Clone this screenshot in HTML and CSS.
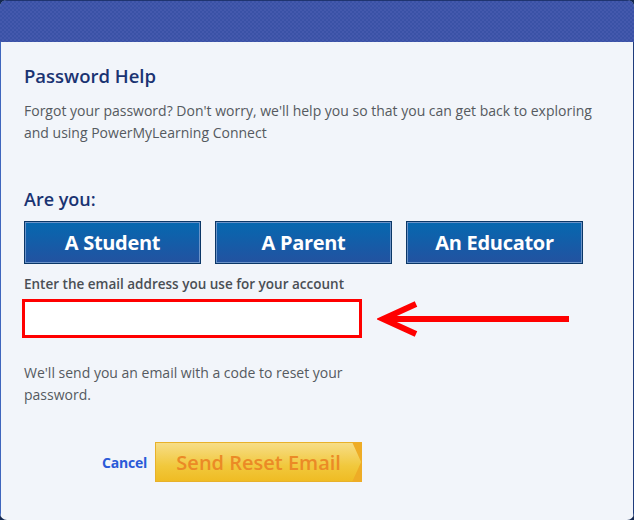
FILE: index.html
```html
<!DOCTYPE html>
<html>
<head>
<meta charset="utf-8">
<link rel="stylesheet" href="styles.css">
</head>
<body>
<div class="modal">
  <div class="modal-header"></div>
  <div class="modal-body">
    <h1 class="title">Password Help</h1>
    <p class="intro">Forgot your password? Don't worry, we'll help you so that you can get back to exploring and using PowerMyLearning Connect</p>
    <h2 class="subtitle">Are you:</h2>
    <div class="roles">
      <button class="role">A Student</button>
      <button class="role">A Parent</button>
      <button class="role">An Educator</button>
    </div>
    <label class="label">Enter the email address you use for your account</label>
    <div class="input-row">
      <div class="email"></div>
      <svg class="arrow" width="194" height="38" viewBox="0 0 194 38">
        <line x1="10" y1="19" x2="192" y2="19" stroke="#ff0000" stroke-width="6"/>
        <polyline points="39,4 6,19 39,34" fill="none" stroke="#ff0000" stroke-width="6"/>
      </svg>
    </div>
    <p class="note">We'll send you an email with a code to reset your password.</p>
    <div class="actions">
      <a class="cancel">Cancel</a>
      <button class="send">Send Reset Email</button>
    </div>
  </div>
</div>
</body>
</html>
```
FILE: styles.css
```css
html, body {
  margin: 0;
  padding: 0;
  background: #14284f;
}
body {
  width: 634px;
  height: 520px;
  overflow: hidden;
  font-family: "Open Sans", "Lato", sans-serif;
}
.modal {
  width: 634px;
  height: 520px;
  border-radius: 7px;
  overflow: hidden;
  display: flex;
  flex-direction: column;
  background: #f2f5fa;
}
.modal-header {
  height: 41px;
  border-top: 1px solid #1f3470;
  background-color: #3a53a7;
  background-image: repeating-conic-gradient(#3a52a6 0 25%, #4459ad 0 50%);
  background-size: 4px 4px;
  flex: none;
}
.modal-body {
  flex: 1;
  border-left: 1px solid #3f66bd;
  border-right: 1px solid #1f3c7c;
  padding: 23px 0 0 23px;
}
.title {
  margin: 0;
  font-size: 18.5px;
  line-height: 22px;
  font-weight: 600;
  color: #1a3372;
}
.intro {
  margin: 13px 0 0;
  font-size: 14px;
  line-height: 22px;
  color: #555a60;
  width: 590px;
}
.subtitle {
  margin: 44px 0 0;
  font-size: 18px;
  line-height: 22px;
  font-weight: 600;
  color: #1a3372;
}
.roles {
  margin-top: 11px;
  display: flex;
  gap: 14px;
}
.role {
  width: 177px;
  height: 43px;
  border: 1px solid #0b3767;
  box-shadow: inset 0 0 0 1px #6b93c8;
  background: linear-gradient(#0568b0, #2352a0);
  color: #fff;
  font-family: inherit;
  font-size: 20px;
  font-weight: 700;
  padding: 0;
  letter-spacing: -0.3px;
}
.label {
  display: block;
  margin-top: 11px;
  font-size: 13.5px;
  line-height: 18px;
  font-weight: 600;
  color: #4a4f55;
}
.input-row {
  margin-top: 5px;
  margin-left: -2px;
  display: flex;
  align-items: center;
}
.email {
  width: 334px;
  height: 33px;
  border: 3px solid #ff0000;
  background: #fff;
}
.arrow {
  margin-left: 15px;
  margin-top: 2px;
  display: block;
}
.note {
  margin: 24px 0 0;
  width: 345px;
  font-size: 14px;
  line-height: 22px;
  color: #555a60;
}
.actions {
  margin-top: 36px;
  margin-left: 78px;
  display: flex;
  align-items: center;
  gap: 8px;
}
.cancel {
  font-size: 14px;
  font-weight: 700;
  color: #2a5ad8;
  letter-spacing: -0.2px;
}
.send {
  width: 207px;
  height: 40px;
  border: 0;
  padding: 0;
  font-family: inherit;
  font-size: 20px;
  font-weight: 600;
  color: #eb8a26;
  background: linear-gradient(#f7de8a, #f1c83c 60%, #efbb22);
  position: relative;
  box-shadow: inset 0 0 0 1px #e8b12a;
}
.send::after {
  content: "";
  position: absolute;
  right: 0;
  top: 0;
  width: 10px;
  height: 40px;
  background: #eeac26;
  clip-path: polygon(0 0, 100% 0, 100% 100%, 0 100%, 90% 50%);
}
```
